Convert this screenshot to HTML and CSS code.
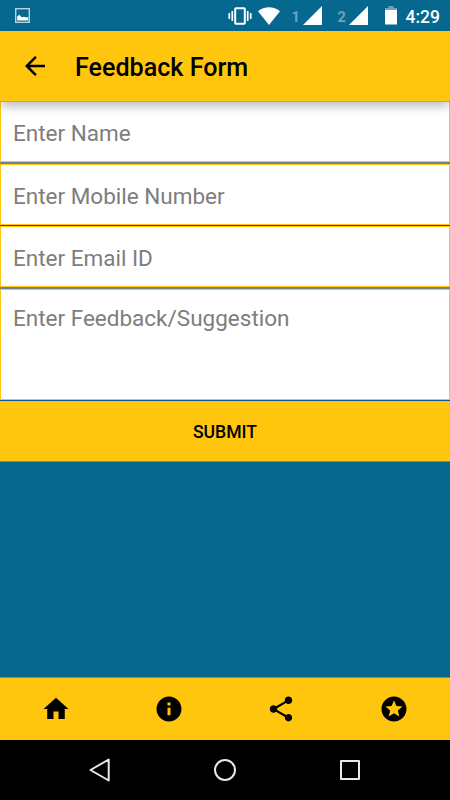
FILE: index.html
```
<!DOCTYPE html>
<html lang="en">
<head>
    <meta charset="UTF-8">
    <meta name="viewport" content="width=device-width, initial-scale=1.0">
    <title>Feedback Form</title>
    <link rel="stylesheet" href="styles.css">
</head>
<body>
    <div class="screen">
        <div class="status-bar">
            <svg class="icon-picture" width="16" height="16" viewBox="0 0 16 16">
                <rect x="0.7" y="0.7" width="13.6" height="13.6" fill="none" stroke="#b9d3de" stroke-width="1.4"/>
                <path d="M2.200 12.500V8.500L4.400 6.700l2.200 2.600L9 8.700l2 .8 2.200-.6v3.600z" fill="#fff"/>
            </svg>
            <svg class="icon-vibrate" width="24" height="18" viewBox="0 0 24 18">
                <rect x="7.200" y="1.200" width="9.600" height="15.600" rx="0.8" fill="none" stroke="#fff" stroke-width="2"/>
                <path d="M4.300 4v10M19.700 4v10M1.300 6v6M22.700 6v6" stroke="#fff" stroke-width="1.7"/>
            </svg>
            <svg class="icon-wifi" width="22" height="18" viewBox="0 0 22 18">
                <path d="M0 4.200C6.500-1.200 15.500-1.200 22 4.200L11 18z" fill="#fff"/>
            </svg>
            <span class="sim sim-one">1</span>
            <svg class="icon-signal" width="19" height="19" viewBox="0 0 19 19"><path d="M19 0v19H0z" fill="#fff"/></svg>
            <span class="sim sim-two">2</span>
            <svg class="icon-signal" width="19" height="19" viewBox="0 0 19 19"><path d="M19 0v19H0z" fill="#fff"/></svg>
            <svg class="icon-battery" width="12" height="19" viewBox="0 0 12 19">
                <path d="M3.500 0h5v2H12v2H0V2h3.500z" fill="#6ba3b9"/>
                <path d="M0 4h12v14.500H0z" fill="#fff"/>
            </svg>
            <span class="clock">4:29</span>
        </div>

        <div class="header">
            <a href="#" class="back-btn">
                <svg width="30" height="30" viewBox="0 0 24 24"><path d="M20 11H7.830l5.590-5.590L12 4l-8 8 8 8 1.410-1.410L7.830 13H20z"/></svg>
            </a>
            <h1>Feedback Form</h1>
        </div>

        <form class="feedback-form">
            <input type="text" class="field name" placeholder="Enter Name">
            <input type="text" class="field mobile" placeholder="Enter Mobile Number">
            <input type="text" class="field email" placeholder="Enter Email ID">
            <textarea class="field message" placeholder="Enter Feedback/Suggestion"></textarea>
            <button type="button" class="submit-btn">SUBMIT</button>
        </form>

        <div class="tab-bar">
            <a href="#"><svg width="30" height="30" viewBox="0 0 24 24"><path d="M10 20v-6h4v6h5v-8h3L12 3 2 12h3v8z"/></svg></a>
            <a href="#"><svg width="30" height="30" viewBox="0 0 24 24"><path d="M12 2C6.480 2 2 6.480 2 12s4.480 10 10 10 10-4.480 10-10S17.520 2 12 2zm1.200 15h-2.400v-6h2.400v6zm0-7.800h-2.400V6.800h2.400v2.400z"/></svg></a>
            <a href="#"><svg width="30" height="30" viewBox="0 0 24 24"><path d="M18 16.080c-.76 0-1.440.3-1.960.77L8.910 12.700c.05-.23.09-.46.09-.7s-.04-.47-.09-.7l7.050-4.110c.54.5 1.250.81 2.040.81 1.660 0 3-1.340 3-3s-1.340-3-3-3-3 1.340-3 3c0 .24.04.47.09.7L8.040 9.810C7.500 9.310 6.790 9 6 9c-1.660 0-3 1.340-3 3s1.340 3 3 3c.79 0 1.500-.31 2.040-.81l7.120 4.160c-.05.21-.08.43-.08.65 0 1.610 1.310 2.920 2.920 2.920s2.920-1.310 2.920-2.920-1.310-2.920-2.920-2.920z"/></svg></a>
            <a href="#"><svg width="30" height="30" viewBox="0 0 24 24"><path d="M11.990 2C6.470 2 2 6.480 2 12s4.470 10 9.990 10C17.520 22 22 17.520 22 12S17.520 2 11.990 2zm4.240 16L12 15.450 7.770 18l1.120-4.810-3.730-3.230 4.920-.42L12 5l1.920 4.530 4.920.42-3.730 3.230L16.230 18z"/></svg></a>
        </div>

        <div class="nav-bar">
            <svg width="24" height="26" viewBox="0 0 24 26"><path d="M20.700 2.500v21L2.500 13z"/></svg>
            <svg width="24" height="26" viewBox="0 0 24 26"><circle cx="12" cy="13" r="10"/></svg>
            <svg width="24" height="26" viewBox="0 0 24 26"><rect x="3" y="4" width="18" height="18"/></svg>
        </div>
    </div>
</body>
</html>
```
FILE: styles.css
```
* {
    margin: 0;
    padding: 0;
    box-sizing: border-box;
}
body {
    font-family: Roboto, sans-serif;
    background-color: #07688f;
}
svg {
    display: block;
    flex: none;
}
.screen {
    display: flex;
    flex-direction: column;
    height: 800px;
    overflow: hidden;
}
.status-bar {
    display: flex;
    align-items: center;
    height: 31px;
    padding: 0 10px 0 15px;
    color: #fff;
}
.icon-vibrate {
    margin-left: auto;
}
.icon-wifi {
    margin-left: 6px;
}
.sim {
    font-size: 14.5px;
    font-weight: 700;
    line-height: 18px;
    padding-top: 4px;
    color: #6ba3b9;
}
.sim-one {
    width: 11px;
    margin-left: 12px;
}
.sim-two {
    width: 11px;
    margin-left: 16px;
}
.icon-battery {
    margin-left: 17px;
}
.clock {
    margin-left: 9px;
    padding-top: 2px;
    font-size: 17.5px;
    font-weight: 500;
}
.header {
    position: relative;
    display: flex;
    align-items: center;
    height: 71px;
    padding-left: 20px;
    background: #ffc60d;
    border-bottom: 1px solid #d3a51a;
    box-shadow: 0 5px 10px -1px rgba(0,0,0,0.28);
}
h1 {
    margin-left: 25px;
    padding-top: 3px;
    font-size: 25.1px;
    font-weight: 500;
    line-height: 30px;
}
.feedback-form {
    display: flex;
    flex-direction: column;
}
.field {
    display: block;
    width: 450px;
    height: 61px;
    padding: 0 12px;
    background: #fff;
    border: 1px solid #ffc60d;
    border-radius: 0;
    outline: none;
    font-family: inherit;
    font-size: 22.5px;
    resize: none;
}
.field::placeholder {
    color: #7d7d7d;
    opacity: 1;
}
.name {
    border-top: none;
    height: 60px;
    padding-top: 3px;
    box-shadow: 0 2px 0 #77838a;
    margin-bottom: 2px;
}
.mobile {
    padding-top: 2px;
    box-shadow: 0 1px 0 #07589a;
    margin-bottom: 1px;
}
.email {
    padding-top: 2px;
    box-shadow: 0 2px 0 #77838a;
    margin-bottom: 2px;
}
.message {
    height: 111px;
    padding-top: 15px;
    line-height: 27px;
    overflow: hidden;
}
.submit-btn {
    height: 62px;
    padding-top: 2px;
    background: #ffc60d;
    border: none;
    border-top: 1px solid #07589a;
    border-bottom: 1px solid #7c8f70;
    font-family: inherit;
    font-size: 17.6px;
    font-weight: 500;
    color: #000;
}
.tab-bar {
    display: flex;
    align-items: center;
    height: 63px;
    margin-top: auto;
    background: #ffc60d;
    border-top: 1px solid #7c8f70;
}
.tab-bar a {
    flex: 1;
    display: flex;
    justify-content: center;
}
.nav-bar {
    display: flex;
    align-items: center;
    justify-content: center;
    gap: 101px;
    height: 60px;
    background: #000;
}
.nav-bar svg {
    fill: none;
    stroke: #e8e8e8;
    stroke-width: 2;
    stroke-linejoin: round;
}
```
